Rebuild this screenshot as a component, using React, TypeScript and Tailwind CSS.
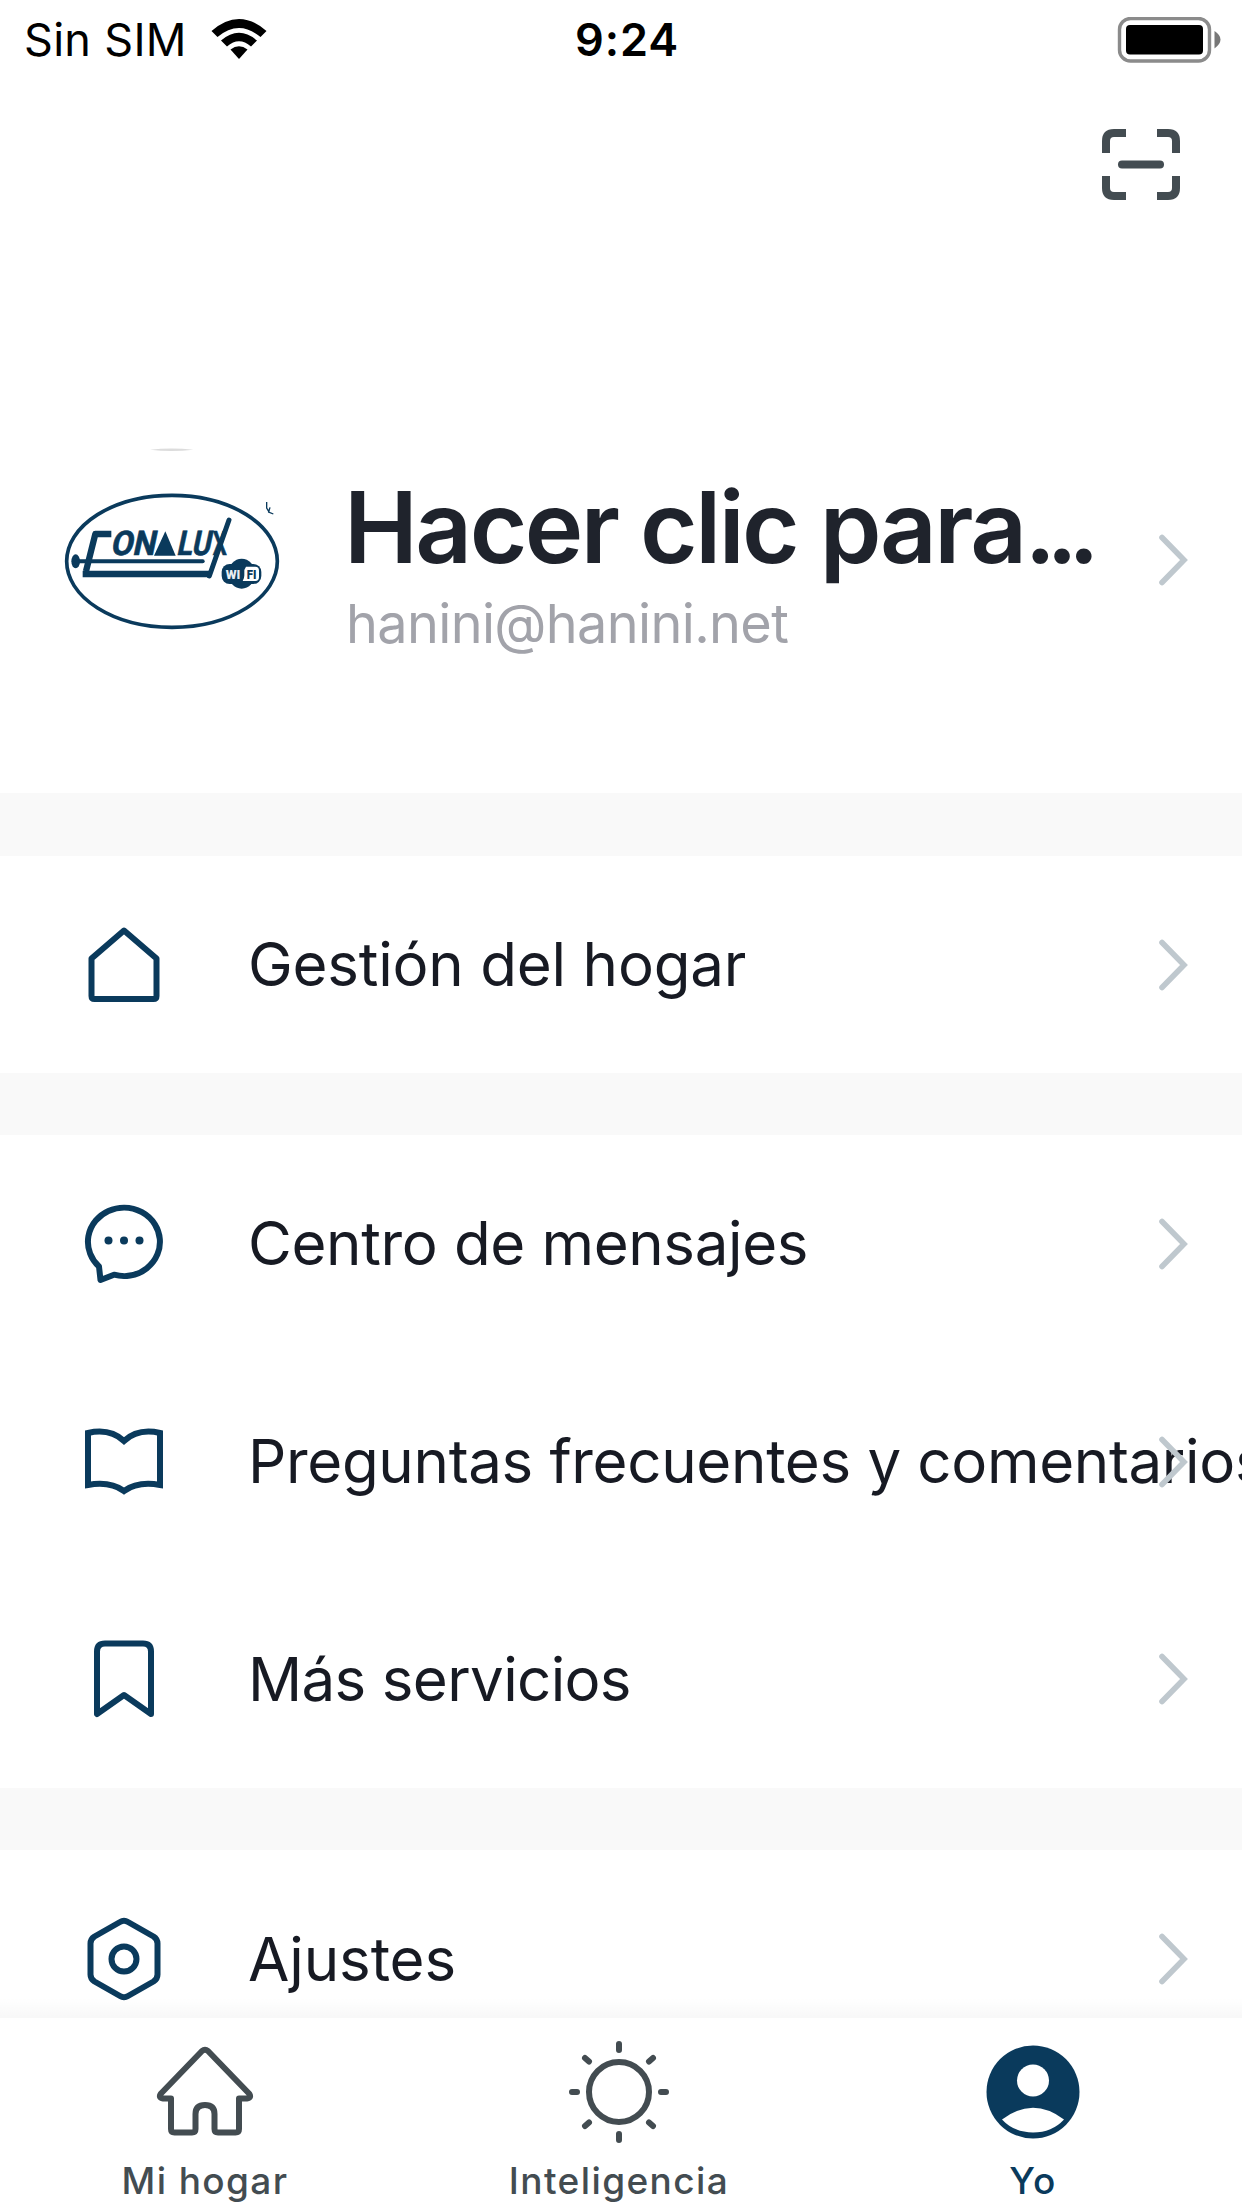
import type { ReactNode } from "react";

const NAVY = "#0a3a5c";
const SLATE = "#434c51";

type MenuItem = {
  label: string;
  icon: ReactNode;
  tracking: string;
};

function Chevron() {
  return (
    <svg width="34" height="56" viewBox="0 0 34 56" fill="none" className="shrink-0">
      <path
        d="M6 5.5 L28 28 L6 50.5"
        stroke="#bfc8ce"
        strokeWidth="5.6"
        strokeLinecap="round"
      />
    </svg>
  );
}

// Menu glyphs share one 84px box with the origin in its middle.
function MenuIcon({ children }: { children: ReactNode }) {
  return (
    <svg
      width="84"
      height="84"
      viewBox="-42 -42 84 84"
      fill="none"
      stroke={NAVY}
      strokeWidth="6"
      strokeLinejoin="round"
      className="shrink-0"
    >
      {children}
    </svg>
  );
}

const home: MenuItem = {
  label: "Gestión del hogar",
  tracking: "tracking-[-0.2px]",
  icon: (
    <MenuIcon>
      <path d="M0 -34.5 L32.5 -6.5 V31 Q32.5 34 29.5 34 H-29.5 Q-32.5 34 -32.5 31 V-6.5 Z" />
    </MenuIcon>
  ),
};

const services: MenuItem[] = [
  {
    label: "Centro de mensajes",
    tracking: "tracking-[-0.35px]",
    icon: (
      <MenuIcon>
        <path d="M-25 22.5 A36 34.2 0 1 1 -10 30.7 L-23.5 36 Z" />
        <g fill={NAVY} stroke="none">
          <circle cx="-15.5" cy="-3.5" r="4" />
          <circle cx="0" cy="-3.5" r="4" />
          <circle cx="15.5" cy="-3.5" r="4" />
        </g>
      </MenuIcon>
    ),
  },
  {
    label: "Preguntas frecuentes y comentarios",
    tracking: "tracking-[-0.33px]",
    icon: (
      <MenuIcon>
        <path
          strokeLinejoin="miter"
          d="M-36 -29 Q-14 -34 0 -21 Q14 -34 36 -29 V23 Q14 19 0 29 Q-14 19 -36 23 Z"
        />
      </MenuIcon>
    ),
  },
  {
    label: "Más servicios",
    tracking: "tracking-[-0.65px]",
    icon: (
      <MenuIcon>
        <path d="M-27 35 V-27.5 Q-27 -35.5 -19 -35.5 H19 Q27 -35.5 27 -27.5 V35 L0 16 Z" />
      </MenuIcon>
    ),
  },
];

const settings: MenuItem = {
  label: "Ajustes",
  tracking: "tracking-[-0.1px]",
  icon: (
    <MenuIcon>
      <path d="M-4 -37 Q0 -39.5 4 -37 L29.5 -22.5 Q33.5 -20 33.5 -15.5 V15.5 Q33.5 20 29.5 22.5 L4 37 Q0 39.5 -4 37 L-29.5 22.5 Q-33.5 20 -33.5 15.5 V-15.5 Q-33.5 -20 -29.5 -22.5 Z" />
      <circle r="12.5" />
    </MenuIcon>
  ),
};

function Row({ item }: { item: MenuItem }) {
  return (
    <div className="flex flex-1 items-center pl-[82px] pr-[52px]">
      {item.icon}
      <span
        className={`ml-[82px] min-w-0 flex-1 whitespace-nowrap pb-px text-[60px] leading-none text-[#171a23] ${item.tracking}`}
      >
        {item.label}
      </span>
      <Chevron />
    </div>
  );
}

function StatusBar() {
  return (
    <header className="grid h-[80px] grid-cols-3 items-center pl-[24px] pr-[21px] text-black">
      <div className="flex items-center gap-[24px]">
        <span className="pb-[2px] text-[45px] leading-none tracking-[0.3px]">Sin SIM</span>
        <svg width="56" height="42" viewBox="0 0 56 42" className="-mt-[2px]">
          <path d="M0.5 13 Q28 -11 55.5 13 L49.5 19 Q28 1 6.5 19 Z" />
          <path d="M10 22.5 Q28 7 46 22.5 L40 28.5 Q28 18 16 28.5 Z" />
          <path d="M19.5 31.5 Q28 25 36.5 31.5 L28 41 Z" />
        </svg>
      </div>
      <span className="pb-[2px] pl-[9px] text-center text-[45px] font-semibold leading-none tracking-[0.9px]">
        9:24
      </span>
      <svg width="106" height="46" viewBox="0 0 106 46" className="-mt-px justify-self-end">
        <rect x="4.5" y="1.5" width="90" height="42.5" rx="11" fill="none" stroke="#8b8b8b" strokeWidth="3.4" />
        <rect x="11" y="8" width="77" height="29.5" rx="4" />
        <path d="M99.5 14 Q105.5 18 105.5 22.5 Q105.5 27 99.5 31.5 Z" fill="#777" />
      </svg>
    </header>
  );
}

function ConaluxLogo() {
  return (
    <svg width="250" height="220" viewBox="0 0 750 660" fill="none" className="shrink-0">
      <path d="M300 59 Q365 52 430 59 Q365 67 300 59 Z" fill="#dcdcdc" />
      <ellipse cx="366" cy="394" rx="316" ry="198" stroke={NAVY} strokeWidth="11" />
      <path d="M650 216 V234 L656 244 M660 232 L656 246 L670 252" stroke={NAVY} strokeWidth="4" />
      {/* heating rod and tray */}
      <ellipse cx="77" cy="394" rx="13" ry="21" fill={NAVY} />
      <path d="M80 394 H458" stroke={NAVY} strokeWidth="12" strokeLinecap="round" />
      <path d="M184 312 H136 L108 424" stroke={NAVY} strokeWidth="19" strokeLinejoin="round" />
      <path d="M98 432 H478" stroke={NAVY} strokeWidth="19" />
      <path d="M478 438 L537 270" stroke={NAVY} strokeWidth="15" strokeLinecap="round" />
      <g
        fill={NAVY}
        stroke={NAVY}
        strokeWidth="2"
        fontFamily="Roboto, sans-serif"
        fontWeight="700"
        fontSize="102"
      >
        <text transform="translate(180 375) skewX(-12)" textLength="134" lengthAdjust="spacingAndGlyphs">ON</text>
        <text transform="translate(378 375) skewX(-12)" textLength="102" lengthAdjust="spacingAndGlyphs">LU</text>
        <text transform="translate(488 375)" textLength="42" lengthAdjust="spacingAndGlyphs">X</text>
      </g>
      <path d="M346 304 L377 377 H312 Z" fill={NAVY} />
      {/* wifi badge */}
      <rect x="515" y="402" width="119" height="60" rx="24" fill={NAVY} />
      <ellipse cx="575" cy="431" rx="40" ry="45" fill={NAVY} />
      <path d="M588 410 H616 Q627 410 627 422 V441 Q627 453 616 453 H578 Q583 446 583 436 V420 Z" fill="#fff" />
      <g fontFamily="Roboto, sans-serif" fontWeight="900" fontSize="39">
        <text x="527" y="446" textLength="44" lengthAdjust="spacingAndGlyphs" fill="#e8eef2">WI</text>
        <text x="590" y="446" textLength="29" lengthAdjust="spacingAndGlyphs" fill={NAVY}>FI</text>
      </g>
    </svg>
  );
}

function Tab({ label, color, children }: { label: string; color: string; children: ReactNode }) {
  return (
    <div className={`flex w-[414px] shrink-0 flex-col items-center pt-[21px] ${color}`}>
      <svg
        width="106"
        height="106"
        viewBox="-53 -53 106 106"
        fill="none"
        stroke="currentColor"
        strokeWidth="6"
        strokeLinejoin="round"
      >
        {children}
      </svg>
      <span className="mt-[18px] text-[37px] font-medium leading-[36px] tracking-[1.4px]">{label}</span>
    </div>
  );
}

export default function App() {
  return (
    <div className="flex h-[2208px] w-[1242px] flex-col overflow-hidden bg-white font-['Inter',sans-serif]">
      <StatusBar />

      <div className="flex h-[350px] shrink-0 items-start justify-end pr-[62px] pt-[49px]">
        <svg width="78" height="71" viewBox="0 0 78 71" fill="none" stroke={SLATE} strokeWidth="8">
          <path d="M4 24 V12 Q4 4 12 4 H24" />
          <path d="M55 4 H66 Q74 4 74 12 V24" />
          <path d="M74 47 V59 Q74 67 66 67 H55" />
          <path d="M24 67 H12 Q4 67 4 59 V47" />
          <path d="M20 35.5 H58" strokeLinecap="round" />
        </svg>
      </div>

      <section className="flex h-[363px] shrink-0 items-start pl-[50px] pr-[52px]">
        <ConaluxLogo />
        <div className="ml-[44px] mt-[38px] flex-1 whitespace-nowrap">
          <h1 className="text-[99px] font-semibold leading-[118px] tracking-[-2.5px] text-[#1f232c]">
            Hacer clic para<span className="tracking-[-9.8px]">...</span>
          </h1>
          <p className="ml-[2px] mt-[5px] text-[54px] leading-[66px] tracking-[-0.65px] text-[#a2a3aa]">
            hanini@hanini.net
          </p>
        </div>
        <div className="mt-[102px]">
          <Chevron />
        </div>
      </section>

      <main className="h-[1225px] shrink-0 overflow-hidden bg-[#f9f9f9]">
        <div className="mt-[63px] flex h-[217px] bg-white">
          <Row item={home} />
        </div>
        <div className="mt-[62px] flex h-[653px] flex-col bg-white">
          {services.map((item) => (
            <Row key={item.label} item={item} />
          ))}
        </div>
        <div className="mt-[62px] flex h-[218px] bg-white">
          <Row item={settings} />
        </div>
      </main>

      <nav className="relative -ml-[2px] flex h-[190px] shrink-0 bg-white">
        <div className="absolute inset-x-0 -top-[20px] h-[20px] bg-linear-to-b from-transparent to-black/3" />
        <Tab label="Mi hogar" color="text-[#434c51]">
          <path d="M-3 -41 Q0 -43.5 3 -41 L44 1.5 Q47 6 42 6.5 H34 V37 Q34 40.5 30.5 40.5 H13 Q9.5 40.5 9.5 37 V22 Q9.5 13 0 13 Q-9.5 13 -9.5 22 V37 Q-9.5 40.5 -13 40.5 H-30.5 Q-34 40.5 -34 37 V6.5 H-42 Q-47 6 -44 1.5 Z" />
        </Tab>
        <Tab label="Inteligencia" color="text-[#434c51]">
          <circle r="30" />
          <path
            strokeLinecap="round"
            d="M0 -48 V-42 M0 42 V48 M-47 0 H-42 M42 0 H47 M-34 -34 L-30 -30.5 M34 -34 L30 -30.5 M-34 34 L-30 30.5 M34 34 L30 30.5"
          />
        </Tab>
        <Tab label="Yo" color="text-[#0a3a5c]">
          <circle r="46.5" fill="currentColor" stroke="none" />
          <circle cy="-11.5" r="16" fill="#fff" stroke="none" />
          <path d="M-31 27.5 Q0 4 31 27.5 Q19 40.5 0 40.5 Q-19 40.5 -31 27.5 Z" fill="#fff" stroke="none" />
        </Tab>
      </nav>
    </div>
  );
}
